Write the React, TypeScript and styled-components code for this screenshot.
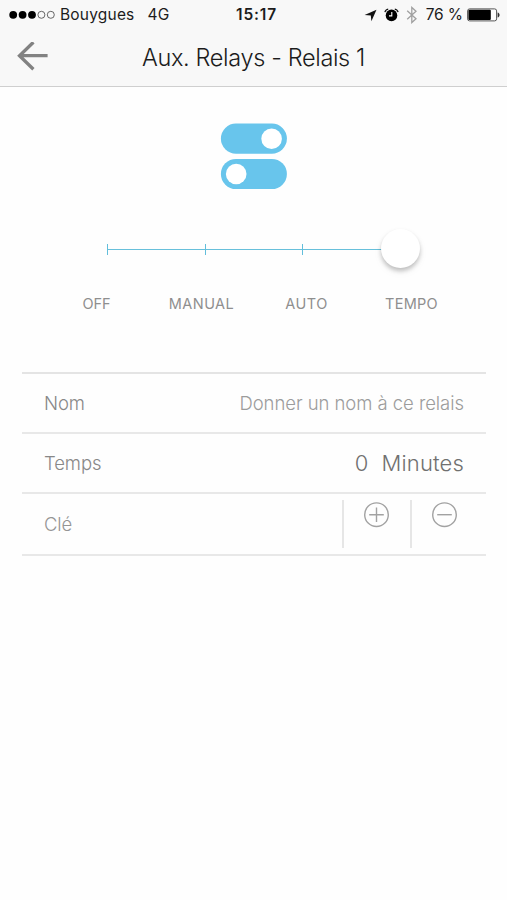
import React from "react";
import styled, { createGlobalStyle } from "styled-components";

const GlobalStyle = createGlobalStyle`
  * { box-sizing: border-box; }
  body { margin: 0; background: #fff; }
`;

const Screen = styled.div`
  width: 507px;
  height: 900px;
  overflow: hidden;
  background: #fefefe;
  font-family: Inter, "Liberation Sans", sans-serif;
`;

const Header = styled.header`
  height: 87px;
  background: #f8f8f8;
  border-bottom: 1px solid #cfcfcf;
`;

const StatusBar = styled.div`
  height: 30px;
  padding: 0 7px 0 9px;
  display: grid;
  grid-template-columns: 227px 1fr auto;
  align-items: center;
  color: #1c1c1c;
`;

const StatusGroup = styled.div`
  display: flex;
  align-items: center;
`;

const StatusText = styled.span<{ $left?: number; $spacing?: number; $bold?: boolean }>`
  margin-left: ${(p) => p.$left ?? 0}px;
  font-size: 15.5px;
  line-height: 30px;
  font-weight: ${(p) => (p.$bold ? 600 : 400)};
  letter-spacing: ${(p) => p.$spacing ?? 0}px;
  white-space: pre;
`;

const StatusIcon = styled.svg<{ $left?: number }>`
  display: block;
  flex: none;
  margin-left: ${(p) => p.$left ?? 0}px;
`;

const NavBar = styled.div`
  height: 56px;
  display: grid;
  grid-template-columns: 64px 1fr 64px;
  align-items: center;
`;

const BackButton = styled.button`
  width: 64px;
  height: 52px;
  padding: 0 0 0 16px;
  display: flex;
  align-items: center;
  justify-content: flex-start;
  border: 0;
  background: none;
`;

const Title = styled.h1`
  margin: 0;
  font-size: 23.5px;
  line-height: 52px;
  font-weight: 300;
  letter-spacing: -0.35px;
  text-align: center;
  color: #1c1c1c;
`;

const Hero = styled.div`
  display: flex;
  justify-content: center;
  padding-top: 36px;
`;

const Slider = styled.div`
  position: relative;
  width: 294px;
  height: 11px;
  margin: 54px 0 0 107px;
  display: grid;
  grid-template-columns: 98px 97px 99px;
`;

const Segment = styled.div`
  display: flex;
  align-items: center;
`;

const Tick = styled.span`
  flex: none;
  width: 1px;
  height: 11px;
  background: #62bedb;
`;

const Track = styled.span`
  flex: 1;
  height: 1px;
  background: #67c0db;
`;

const Knob = styled.span`
  position: absolute;
  right: -19px;
  top: -15px;
  width: 39px;
  height: 39px;
  border-radius: 50%;
  background: #fff;
  box-shadow: 0 3px 4px rgba(0, 0, 0, 0.22), 0 4px 10px rgba(0, 0, 0, 0.05);
`;

const Modes = styled.div`
  display: grid;
  grid-template-columns: repeat(4, 105px);
  margin: 39px 0 0 44px;
`;

const Mode = styled.span<{ $spacing: number }>`
  text-align: center;
  font-size: 14.5px;
  line-height: 20px;
  letter-spacing: ${(p) => p.$spacing}px;
  color: #8f8f8f;
`;

const Form = styled.div`
  margin: 58px 21px 0 22px;
  border-top: 2px solid #e4e4e4;
`;

const Row = styled.div<{ $height: number }>`
  height: ${(p) => p.$height}px;
  padding: 0 22px;
  display: flex;
  align-items: center;
  justify-content: space-between;
  border-bottom: 2px solid #e8e8e8;
`;

const Label = styled.span<{ $light?: boolean }>`
  font-size: 18.5px;
  font-weight: ${(p) => (p.$light ? 300 : 350)};
  letter-spacing: -0.1px;
  line-height: 24px;
  color: ${(p) => (p.$light ? "#959595" : "#888")};
`;

const NameValue = styled.span`
  font-size: 18.5px;
  font-weight: 300;
  letter-spacing: -0.05px;
  line-height: 24px;
  color: #9c9c9c;
`;

const TimeValue = styled.span`
  display: flex;
  gap: 13px;
  font-size: 22px;
  font-weight: 350;
  letter-spacing: 0.15px;
  line-height: 28px;
  color: #707070;
`;

const KeyActions = styled.div`
  display: flex;
  height: 48px;
  margin-right: -22px;
`;

const KeyButton = styled.button<{ $width: number }>`
  width: ${(p) => p.$width}px;
  height: 48px;
  padding: 1px 0 0 19px;
  display: flex;
  align-items: flex-start;
  border: 0;
  border-left: 2px solid #e6e6e6;
  background: none;
`;

const SIGNAL = [true, true, true, false, false];
const MODES = [
  { name: "OFF", spacing: 0 },
  { name: "MANUAL", spacing: 0.45 },
  { name: "AUTO", spacing: 0.5 },
  { name: "TEMPO", spacing: 0.3 },
];

function KeyIcon({ plus }: { plus?: boolean }) {
  return (
    <svg width="27" height="27" viewBox="0 0 27 27" fill="none" stroke="#a2a2a2" strokeWidth="1.4">
      <circle cx="13.5" cy="13.7" r="11.8" />
      <path d={plus ? "M6.2 13.7H20.8M13.5 6.4V21" : "M6.2 13.7H20.8"} />
    </svg>
  );
}

export default function App() {
  return (
    <Screen>
      <GlobalStyle />
      <Header>
        <StatusBar>
          <StatusGroup>
            <StatusIcon width="47" height="10" viewBox="0 0 47 10">
              {SIGNAL.map((on, i) => (
                <circle
                  key={i}
                  cx={4.2 + i * 9.4}
                  cy="4.8"
                  r={on ? 3.9 : 3.5}
                  fill={on ? "#000" : "none"}
                  stroke={on ? "none" : "#555"}
                  strokeWidth="0.9"
                />
              ))}
            </StatusIcon>
            <StatusText $left={4} $spacing={0.2}>Bouygues</StatusText>
            <StatusText $left={13} $spacing={0.3}>4G</StatusText>
          </StatusGroup>
          <StatusText $bold $spacing={0.85}>15:17</StatusText>
          <StatusGroup>
            <StatusIcon width="13" height="13" viewBox="0 0 13 13">
              <path d="M12.5 .8 7.4 12.2 6.8 6.6 .6 6.1Z" fill="#111" />
            </StatusIcon>
            <StatusIcon $left={7} width="15" height="15" viewBox="0 0 15 15" fill="none">
              <circle cx="7.5" cy="7.4" r="5.8" fill="#000" />
              <path d="M.9 4.2A4 4 0 0 1 4.2 1.1M10.8 1.1A4 4 0 0 1 14.1 4.2" stroke="#111" strokeWidth="1.2" />
              <path d="M7.8 4.1V7.9H5" stroke="#fff" strokeWidth="1.1" />
            </StatusIcon>
            <StatusIcon $left={7} width="12" height="18" viewBox="0 0 12 18" fill="none">
              <path d="M1.2 4.8 10 12.8 5.8 16.6V1.4L10 5.2 1.2 13.2" stroke="#a0a0a0" strokeWidth="1.3" />
            </StatusIcon>
            <StatusText $left={8} $spacing={-0.1}>76 %</StatusText>
            <StatusIcon $left={4} width="33" height="14" viewBox="0 0 33 14">
              <rect x=".6" y=".9" width="29" height="12" rx="2" fill="#fff" stroke="#555" />
              <rect x="1.4" y="1.8" width="22.4" height="10.2" rx="1" fill="#000" />
              <path d="M30.6 4.4C33.2 5 33.2 8.8 30.6 9.4Z" fill="#333" />
            </StatusIcon>
          </StatusGroup>
        </StatusBar>
        <NavBar>
          <BackButton aria-label="Back">
            <svg width="32" height="32" viewBox="0 0 32 32" fill="none" stroke="#828282" strokeWidth="3.3">
              <path d="M17.4 .2 3.5 13.7 17.4 27.2M3.5 13.7H31.6" />
            </svg>
          </BackButton>
          <Title>Aux. Relays - Relais 1</Title>
        </NavBar>
      </Header>
      <Hero>
        <svg width="67" height="67" viewBox="0 0 67 67">
          <rect x=".9" y=".5" width="66" height="30.2" rx="15.1" fill="#68c5ec" />
          <circle cx="51.6" cy="15.8" r="10.3" fill="#fff" />
          <rect x=".9" y="35.9" width="66" height="30.2" rx="15.1" fill="#68c5ec" />
          <circle cx="16.2" cy="51" r="10.3" fill="#fff" />
        </svg>
      </Hero>
      <Slider>
        {MODES.slice(0, -1).map((m) => (
          <Segment key={m.name}>
            <Tick />
            <Track />
          </Segment>
        ))}
        <Knob />
      </Slider>
      <Modes>
        {MODES.map((m) => (
          <Mode key={m.name} $spacing={m.spacing}>
            {m.name}
          </Mode>
        ))}
      </Modes>
      <Form>
        <Row $height={60}>
          <Label>Nom</Label>
          <NameValue>Donner un nom à ce relais</NameValue>
        </Row>
        <Row $height={60}>
          <Label>Temps</Label>
          <TimeValue>
            <span>0</span>
            <span>Minutes</span>
          </TimeValue>
        </Row>
        <Row $height={62}>
          <Label $light>Clé</Label>
          <KeyActions>
            <KeyButton $width={68} aria-label="Add">
              <KeyIcon plus />
            </KeyButton>
            <KeyButton $width={76} aria-label="Remove">
              <KeyIcon />
            </KeyButton>
          </KeyActions>
        </Row>
      </Form>
    </Screen>
  );
}
